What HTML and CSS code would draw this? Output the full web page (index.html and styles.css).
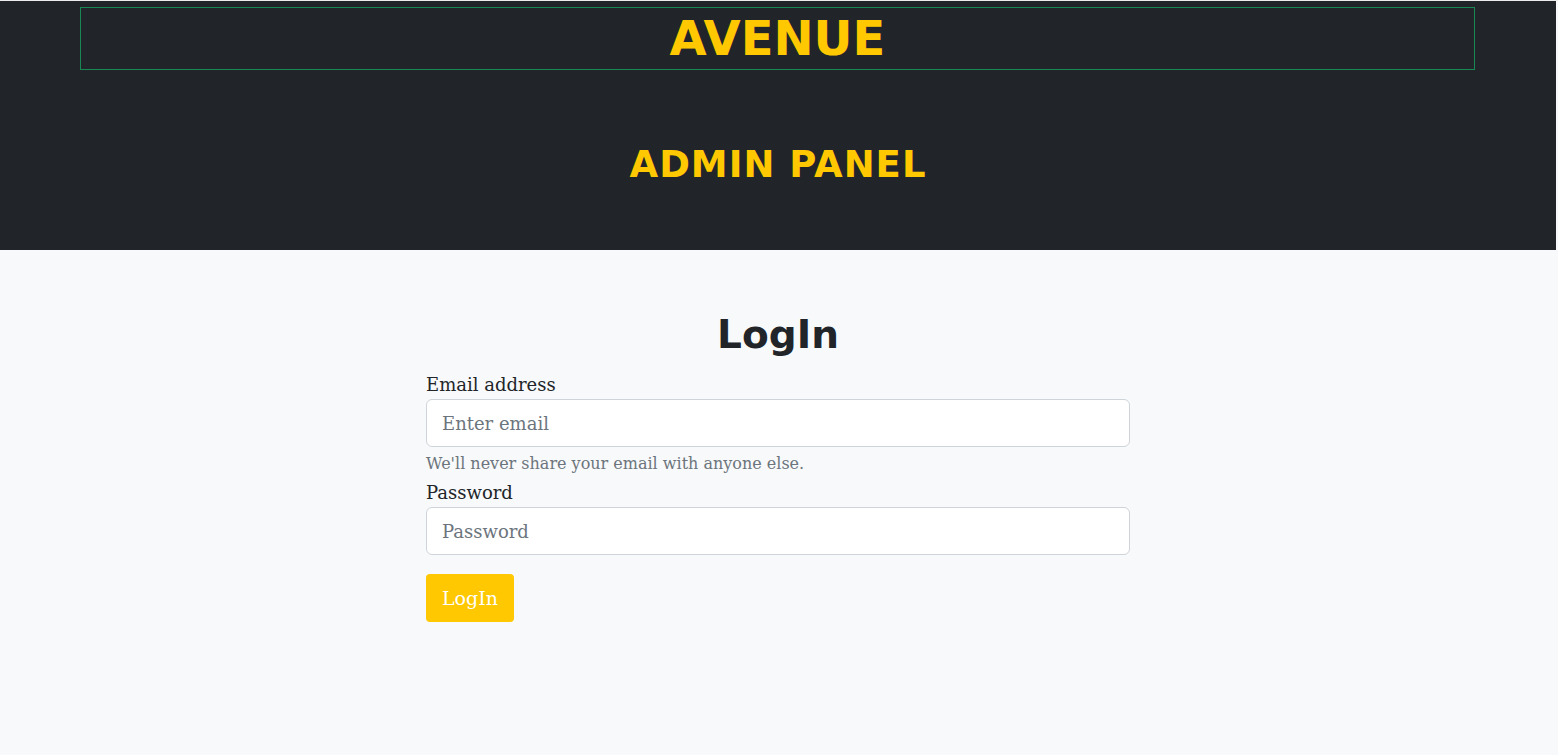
FILE: index.html
```html
<!DOCTYPE html>
<html lang="en">
<head>
<meta charset="utf-8">
<title>Avenue Admin</title>
<link rel="stylesheet" href="styles.css">
</head>
<body>
<div class="page">
  <header class="site-header">
    <div class="brand-box"><span class="brand">AVENUE</span></div>
    <h2 class="panel-title">ADMIN PANEL</h2>
  </header>
  <main class="login">
    <h1 class="login-title">LogIn</h1>
    <form class="login-form">
      <label class="field-label" for="email">Email address</label>
      <input class="field-input" id="email" type="email" placeholder="Enter email">
      <div class="field-help">We'll never share your email with anyone else.</div>
      <label class="field-label" for="pw">Password</label>
      <input class="field-input" id="pw" type="password" placeholder="Password">
      <button class="btn-login" type="button">LogIn</button>
    </form>
  </main>
</div>
</body>
</html>
```
FILE: styles.css
```css
html, body {
  margin: 0;
  padding: 0;
}
body {
  background: #f8f9fa;
  border-top: 1px solid #ececec;
  font-family: "DejaVu Serif", serif;
  color: #212529;
  min-height: 754px;
}
.page {
  margin-right: 2px;
}
.site-header {
  background: #212529;
  height: 249px;
  padding-top: 6px;
  box-sizing: border-box;
  overflow: hidden;
}
.brand-box {
  margin: 0 81px 0 80px;
  border: 1px solid #198754;
  height: 63px;
  box-sizing: border-box;
  display: flex;
  align-items: center;
  justify-content: center;
}
.brand {
  font-family: "DejaVu Sans", sans-serif;
  font-weight: bold;
  font-size: 48px;
  line-height: 1;
  color: #ffc800;
  padding-bottom: 2px;
}
.panel-title {
  margin: 73px 0 0;
  text-align: center;
  font-family: "DejaVu Sans", sans-serif;
  font-weight: bold;
  font-size: 37px;
  line-height: 44px;
  letter-spacing: 1px;
  color: #ffc800;
}
.login {
  width: 704px;
  margin: 0 auto;
  padding-top: 61px;
}
.login-title {
  margin: 0 0 10px;
  text-align: center;
  font-family: "DejaVu Sans", sans-serif;
  font-weight: bold;
  font-size: 39px;
  line-height: 47px;
  color: #212529;
}
.login-form {
  display: flex;
  flex-direction: column;
  align-items: flex-start;
}
.field-label {
  font-size: 18px;
  line-height: 27px;
  padding-top: 3px;
  margin-bottom: 1px;
}
.field-input {
  width: 100%;
  box-sizing: border-box;
  height: 48px;
  padding: 0 15px;
  border: 1px solid #ced4da;
  border-radius: 6px;
  background: #fff;
  font-family: "DejaVu Serif", serif;
  font-size: 18px;
  color: #212529;
  outline: none;
}
.field-input::placeholder {
  color: #6c757d;
}
.field-help {
  margin-top: 5px;
  font-size: 16px;
  line-height: 24px;
  color: #6c757d;
}
.btn-login {
  margin-top: 19px;
  height: 48px;
  padding: 0 16px;
  border: none;
  border-radius: 4px;
  background: #ffc800;
  color: #fff;
  font-family: "DejaVu Serif", serif;
  font-size: 19px;
  cursor: pointer;
}
```
